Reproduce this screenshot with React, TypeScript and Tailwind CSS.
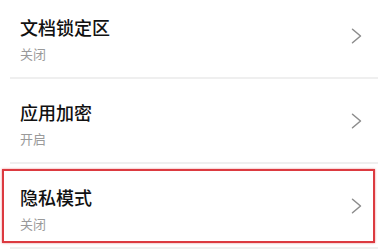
const rows = [
  { title: '文档锁定区', state: '关闭' },
  { title: '应用加密', state: '开启' },
  { title: '隐私模式', state: '关闭', marked: true },
];

function Chevron() {
  return (
    <svg width="11" height="16" viewBox="0 0 11 16" fill="none" className="shrink-0 self-center">
      <path d="M1.5 1.2 L9.5 8 L1.5 14.8" stroke="#8c8c8c" strokeWidth="1.5" strokeLinecap="round" strokeLinejoin="round" />
    </svg>
  );
}

function Row({ title, state, marked }: { title: string; state: string; marked?: boolean }) {
  return (
    <div className="relative">
      <div className="flex h-[83px] pl-[20px] pr-[19px]">
        <div className="flex-1 flex flex-col pt-[21px]">
          <span className="text-[18px] leading-[24px] font-medium text-[#111]">{title}</span>
          <span className="mt-[7px] text-[13px] leading-[16px] text-[#9a9a9a]">{state}</span>
        </div>
        <Chevron />
      </div>
      <div className="ml-[10px] mr-[3px] h-[2px] bg-[#efefef]" />
      {marked && (
        <div className="absolute top-[5px] left-[2px] right-[6px] h-[74px] border-2 border-[#dc3a40] shadow-[0_0_2px_rgba(220,58,64,0.6)]" />
      )}
    </div>
  );
}

export default function App() {
  return (
    <div
      className="w-[381px] h-[251px] overflow-hidden bg-white"
      style={{ fontFamily: '"Noto Sans CJK SC", "Noto Sans", sans-serif' }}
    >
      <div className="-mt-[6px] flex flex-col">
        {rows.map((r) => (
          <Row key={r.title} {...r} />
        ))}
      </div>
    </div>
  );
}
